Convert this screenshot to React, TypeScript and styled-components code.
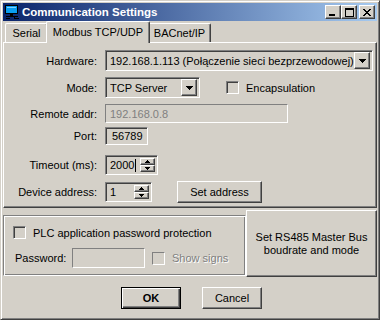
import React from 'react';
import styled, { createGlobalStyle, css } from 'styled-components';

const GlobalStyle = createGlobalStyle`
  html, body {
    margin: 0;
    padding: 0;
    background: #d4d0c8;
  }
  body {
    font-family: "Liberation Sans", Arial, sans-serif;
    font-size: 11px;
    color: #000;
  }
  * {
    box-sizing: border-box;
  }
`;

const raised = css`
  border: 1px solid;
  border-color: #fff #404040 #404040 #fff;
  box-shadow: inset -1px -1px #808080;
  background: #d4d0c8;
`;

const sunken = css`
  border: 1px solid;
  border-color: #808080 #fff #fff #808080;
  box-shadow: inset 1px 1px #404040, inset -1px -1px #d4d0c8;
  background: #d4d0c8;
`;

const Window = styled.div`
  width: 380px;
  height: 320px;
  padding: 2px;
  border: 1px solid;
  border-color: #d4d0c8 #404040 #404040 #d4d0c8;
  box-shadow: inset 1px 1px #fff, inset -1px -1px #808080;
  background: #d4d0c8;
  display: flex;
  flex-direction: column;
`;

const TitleBar = styled.div`
  height: 18px;
  display: flex;
  align-items: center;
  padding: 0 2px;
  background: linear-gradient(to right, #0a246a, #a6caf0);
`;

const TitleText = styled.span`
  margin-left: 3px;
  color: #fff;
  font-weight: bold;
  font-size: 11.5px;
  white-space: nowrap;
`;

const CaptionButtons = styled.div`
  margin-left: auto;
  display: flex;
`;

const CaptionButton = styled.div<{ $gap?: number }>`
  ${raised};
  width: 16px;
  height: 14px;
  margin-left: ${({ $gap }) => $gap ?? 0}px;
  display: flex;
  align-items: center;
  justify-content: center;
`;

const TabStrip = styled.div`
  height: 21px;
  display: flex;
  align-items: flex-end;
  padding-left: 2px;
`;

const Tab = styled.div<{ $width: number; $active?: boolean }>`
  width: ${({ $width }) => $width}px;
  height: 19px;
  display: flex;
  align-items: center;
  justify-content: center;
  border-top: 1px solid #fff;
  border-left: 1px solid #fff;
  border-right: 1px solid #404040;
  border-radius: 2px 2px 0 0;
  box-shadow: inset -1px 0 #808080;
  background: #d4d0c8;
  white-space: nowrap;

  ${({ $active, $width }) =>
    $active &&
    css`
      width: ${$width + 4}px;
      height: 22px;
      margin: 0 -2px -1px;
      padding-bottom: 2px;
      position: relative;
      z-index: 1;
    `}
`;

const Panel = styled.div`
  border: 1px solid;
  border-color: #fff #404040 #404040 #fff;
  box-shadow: inset -1px -1px #808080;
  padding: 7px 0 4px;
  display: flex;
  flex-direction: column;
`;

const FormRow = styled.div<{ $height: number; $top: number }>`
  display: flex;
  align-items: center;
  height: ${({ $height }) => $height}px;
  margin-top: ${({ $top }) => $top}px;
`;

const Label = styled.span`
  width: 93px;
  margin-right: 8px;
  text-align: right;
  white-space: nowrap;
`;

const Combo = styled.div<{ $width: number }>`
  ${sunken};
  width: ${({ $width }) => $width}px;
  height: 21px;
  padding: 0 2px 0 4px;
  display: flex;
  align-items: center;
`;

const ComboText = styled.span`
  flex: 1;
  overflow: hidden;
  white-space: nowrap;
`;

const DropButton = styled.div`
  ${raised};
  width: 16px;
  height: 17px;
  flex-shrink: 0;
  display: flex;
  align-items: center;
  justify-content: center;
`;

const Edit = styled.div<{ $width: number; $height: number; $flat?: boolean; $dim?: boolean }>`
  ${sunken};
  width: ${({ $width }) => $width}px;
  height: ${({ $height }) => $height}px;
  padding-left: ${({ $flat }) => ($flat ? 4 : 6)}px;
  display: flex;
  align-items: center;
  white-space: nowrap;
  color: ${({ $dim }) => ($dim ? '#808080' : '#000')};
  ${({ $flat }) =>
    $flat &&
    css`
      box-shadow: none;
    `}
`;

const SpinBox = styled.div<{ $width: number }>`
  ${sunken};
  width: ${({ $width }) => $width}px;
  height: 20px;
  padding: 2px;
  display: flex;
`;

const SpinText = styled.span`
  flex: 1;
  display: flex;
  align-items: center;
  padding-left: 2px;
`;

const Caret = styled.span`
  width: 1px;
  height: 13px;
  margin-left: 1px;
  background: #000;
`;

const SpinButtons = styled.div`
  width: 15px;
  display: flex;
  flex-direction: column;
`;

const SpinButton = styled.div`
  ${raised};
  flex: 1;
  display: flex;
  align-items: center;
  justify-content: center;
`;

const CheckRow = styled.div<{ $left?: number }>`
  display: flex;
  align-items: center;
  margin-left: ${({ $left }) => $left ?? 0}px;
`;

const CheckBox = styled.span<{ $disabled?: boolean }>`
  ${sunken};
  width: 13px;
  height: 13px;
  margin-right: 7px;
  ${({ $disabled }) =>
    $disabled &&
    css`
      box-shadow: none;
    `}
`;

const DisabledText = styled.span`
  color: #808080;
  text-shadow: 1px 1px #fff;
`;

const Button = styled.button<{ $width: number; $height: number; $left?: number; $default?: boolean }>`
  ${raised};
  width: ${({ $width }) => $width}px;
  height: ${({ $height }) => $height}px;
  margin: 0 0 0 ${({ $left }) => $left ?? 0}px;
  padding: 0;
  font: inherit;
  color: #000;
  line-height: 13px;
  ${({ $default }) =>
    $default &&
    css`
      border: 1px solid #000;
      box-shadow: inset 1px 1px #fff, inset -1px -1px #404040, inset -2px -2px #808080;
      font-weight: bold;
    `}
`;

const BottomRow = styled.div`
  display: flex;
  margin-top: 2px;
  height: 67px;
`;

const GroupBox = styled.div`
  width: 243px;
  height: 61px;
  margin-top: 5px;
  border: 1px solid;
  border-color: #808080 #fff #fff #808080;
  box-shadow: inset 1px 1px #fff, inset -1px -1px #808080;
  padding: 10px 0 0 9px;
  display: flex;
  flex-direction: column;
`;

const PasswordRow = styled.div`
  display: flex;
  align-items: center;
  margin-top: 9px;
  padding-left: 2px;
`;

const PasswordLabel = styled.span`
  width: 57px;
`;

const DialogButtons = styled.div`
  display: flex;
  justify-content: center;
  gap: 21px;
  margin-top: 10px;
  padding-left: 3px;
`;

const DownArrow = ({ w = 7 }: { w?: number }) => {
  const h = Math.ceil(w / 2);
  const d = `M0 0h${w}v1h-1v1h-1v1h-1v1h-1v-1h-1v-1h-1v-1h-1z`;
  return (
    <svg width={w} height={h} viewBox={`0 0 ${w} ${h}`} shapeRendering="crispEdges">
      {w === 7 ? (
        <path d={d} fill="#000" />
      ) : (
        <path d="M0 0h5v1h-1v1h-1v1h-1v-1h-1v-1h-1z" fill="#000" />
      )}
    </svg>
  );
};

const UpArrow = () => (
  <svg width={5} height={3} viewBox="0 0 5 3" shapeRendering="crispEdges">
    <path d="M2 0h1v1h1v1h1v1h-5v-1h1v-1h1z" fill="#000" />
  </svg>
);

const AppIcon = () => (
  <svg width={14} height={14} viewBox="0 0 14 14" shapeRendering="crispEdges">
    <rect x={0.5} y={0.5} width={12} height={8} fill="#0a9ef0" stroke="#000" />
    <rect x={2} y={2} width={9} height={1} fill="#7fd0ff" />
    <rect x={5} y={9} width={3} height={2} fill="#000" />
    <rect x={1} y={11} width={12} height={1} fill="#000" />
    <rect x={1} y={13} width={4} height={1} fill="#000" />
    <rect x={9} y={12} width={1} height={2} fill="#000" />
    <rect x={10} y={13} width={4} height={1} fill="#000" />
  </svg>
);

const MinGlyph = () => (
  <svg width={8} height={7} viewBox="0 0 8 7" shapeRendering="crispEdges">
    <rect x={0} y={5} width={6} height={2} fill="#000" />
  </svg>
);

const MaxGlyph = () => (
  <svg width={9} height={9} viewBox="0 0 9 9" shapeRendering="crispEdges">
    <rect x={0} y={0} width={9} height={2} fill="#000" />
    <rect x={0} y={0} width={1} height={9} fill="#000" />
    <rect x={8} y={0} width={1} height={9} fill="#000" />
    <rect x={0} y={8} width={9} height={1} fill="#000" />
  </svg>
);

const CloseGlyph = () => (
  <svg width={8} height={7} viewBox="0 0 8 7" shapeRendering="crispEdges">
    {[0, 1, 2, 3, 4, 5, 6].map((i) => (
      <React.Fragment key={i}>
        <rect x={i < 4 ? i : i - 1 + 1} y={i} width={2} height={1} fill="#000" />
        <rect x={6 - i} y={i} width={2} height={1} fill="#000" />
      </React.Fragment>
    ))}
  </svg>
);

const ComboBox = ({ width, value }: { width: number; value: string }) => (
  <Combo $width={width}>
    <ComboText>{value}</ComboText>
    <DropButton>
      <DownArrow />
    </DropButton>
  </Combo>
);

const Spinner = ({ width, value, caret }: { width: number; value: string; caret?: boolean }) => (
  <SpinBox $width={width}>
    <SpinText>
      {value}
      {caret && <Caret />}
    </SpinText>
    <SpinButtons>
      <SpinButton>
        <UpArrow />
      </SpinButton>
      <SpinButton>
        <DownArrow w={5} />
      </SpinButton>
    </SpinButtons>
  </SpinBox>
);

export default function App() {
  return (
    <>
      <GlobalStyle />
      <Window>
        <TitleBar>
          <AppIcon />
          <TitleText>Communication Settings</TitleText>
          <CaptionButtons>
            <CaptionButton>
              <MinGlyph />
            </CaptionButton>
            <CaptionButton>
              <MaxGlyph />
            </CaptionButton>
            <CaptionButton $gap={2}>
              <CloseGlyph />
            </CaptionButton>
          </CaptionButtons>
        </TitleBar>

        <TabStrip>
          <Tab $width={43}>Serial</Tab>
          <Tab $width={100} $active>
            Modbus TCP/UDP
          </Tab>
          <Tab $width={63}>BACnet/IP</Tab>
        </TabStrip>

        <Panel>
          <FormRow $height={21} $top={0}>
            <Label>Hardware:</Label>
            <ComboBox width={268} value="192.168.1.113 (Połączenie sieci bezprzewodowej)" />
          </FormRow>
          <FormRow $height={21} $top={6}>
            <Label>Mode:</Label>
            <ComboBox width={95} value="TCP Server" />
            <CheckRow $left={26}>
              <CheckBox />
              Encapsulation
            </CheckRow>
          </FormRow>
          <FormRow $height={19} $top={6}>
            <Label>Remote addr:</Label>
            <Edit $width={183} $height={19} $flat $dim>
              192.168.0.8
            </Edit>
          </FormRow>
          <FormRow $height={18} $top={4}>
            <Label>Port:</Label>
            <Edit $width={43} $height={18}>
              56789
            </Edit>
          </FormRow>
          <FormRow $height={20} $top={10}>
            <Label>Timeout (ms):</Label>
            <Spinner width={53} value="2000" caret />
          </FormRow>
          <FormRow $height={22} $top={6}>
            <Label>Device address:</Label>
            <Spinner width={47} value="1" />
            <Button $width={85} $height={22} $left={25}>
              Set address
            </Button>
          </FormRow>
        </Panel>

        <BottomRow>
          <GroupBox>
            <CheckRow>
              <CheckBox />
              PLC application password protection
            </CheckRow>
            <PasswordRow>
              <PasswordLabel>Password:</PasswordLabel>
              <Edit $width={73} $height={20} $flat />
              <CheckRow $left={7}>
                <CheckBox $disabled />
                <DisabledText>Show signs</DisabledText>
              </CheckRow>
            </PasswordRow>
          </GroupBox>
          <Button $width={131} $height={67}>
            Set RS485 Master Bus
            <br />
            boudrate and mode
          </Button>
        </BottomRow>

        <DialogButtons>
          <Button $width={60} $height={22} $default>
            OK
          </Button>
          <Button $width={60} $height={22}>
            Cancel
          </Button>
        </DialogButtons>
      </Window>
    </>
  );
}
